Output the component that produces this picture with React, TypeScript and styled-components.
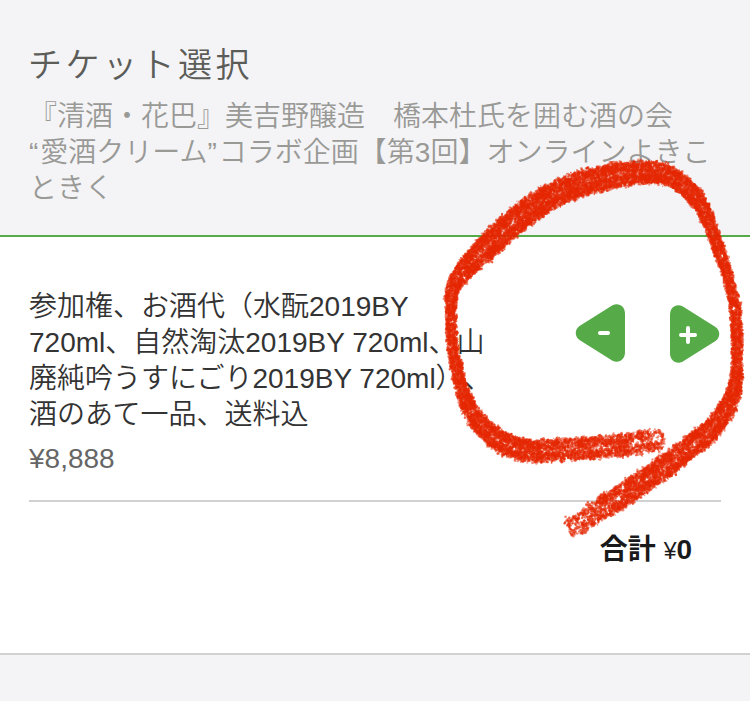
import React from "react";
import styled, { createGlobalStyle } from "styled-components";

const ticketLines = [
  "参加権、お酒代（水酛2019BY",
  "720ml、自然淘汰2019BY 720ml、山",
  "廃純吟うすにごり2019BY 720ml）、",
  "酒のあて一品、送料込",
];

// x, y, half width, density
const strokePoints = [
  [662, 440, 11, 0.28],
  [650, 441, 12, 0.42],
  [630, 444, 12, 0.55],
  [602, 447, 12, 0.62],
  [573, 449, 12, 0.66],
  [545, 451, 12, 0.72],
  [522, 450, 12, 0.85],
  [497, 439, 11, 1],
  [474, 416, 9, 1],
  [463, 392, 7, 1],
  [457, 370, 6, 1],
  [452, 340, 5.5, 1],
  [451, 307, 5.5, 1],
  [453, 287, 7.5, 1],
  [463, 272, 10, 1],
  [482, 252, 12.5, 0.95],
  [513, 223, 13.5, 0.95],
  [547, 199, 13.5, 0.95],
  [580, 184, 13.5, 0.92],
  [613, 176, 13, 0.92],
  [637, 173, 12, 0.95],
  [660, 173, 11, 1],
  [677, 180, 9.5, 1],
  [696, 198, 9, 1],
  [708, 220, 7, 1],
  [718, 247, 6, 1],
  [728, 277, 5.5, 1],
  [735, 307, 5.5, 1],
  [737, 337, 5.5, 1],
  [737, 363, 5.5, 1],
  [735, 387, 7.5, 1],
  [727, 409, 9.5, 0.95],
  [710, 430, 11, 0.9],
  [683, 453, 12, 0.85],
  [653, 475, 12, 0.8],
  [623, 495, 12, 0.72],
  [597, 511, 12, 0.5],
  [569, 530, 11, 0.22],
];

const spline = (a: number, b: number, c: number, d: number, t: number) =>
  0.5 * (2 * b + (c - a) * t + (2 * a - 5 * b + 4 * c - d) * t * t + (3 * b - a - 3 * c + d) * t * t * t);

const circle = (cx: number, cy: number, r: number) =>
  `M${(cx - r).toFixed(1)} ${cy.toFixed(1)}a${r.toFixed(2)} ${r.toFixed(2)} 0 1 0 ${(r * 2).toFixed(2)} 0a${r.toFixed(2)} ${r.toFixed(2)} 0 1 0 ${(-r * 2).toFixed(2)} 0`;

const createCrayon = () => {
  let seed = 4217;
  const random = () => {
    seed = (seed + 0x6d2b79f5) | 0;
    let t = Math.imul(seed ^ (seed >>> 15), 1 | seed);
    t = (t + Math.imul(t ^ (t >>> 7), 61 | t)) ^ t;
    return ((t ^ (t >>> 14)) >>> 0) / 4294967296;
  };
  // several layers, so that overlapping grains get darker
  const layers = Array.from({ length: 10 }, () => "");
  const last = strokePoints.length - 1;

  for (let i = 0; i < last; i++) {
    const p0 = strokePoints[Math.max(0, i - 1)];
    const p1 = strokePoints[i];
    const p2 = strokePoints[i + 1];
    const p3 = strokePoints[Math.min(last, i + 2)];
    const at = (t: number) => p1.map((_, k) => spline(p0[k], p1[k], p2[k], p3[k], t));
    const length = Math.hypot(p2[0] - p1[0], p2[1] - p1[1]);
    const width = (p1[2] + p2[2]) / 2;

    // grains come in small clumps
    const count = Math.round(length * width * 1.5);
    for (let n = 0; n < count; n++) {
      const t = random();
      const [x, y, half, density] = at(t);
      if (random() > density) continue;
      const [nx, ny] = at(t + 0.01);
      const angle = Math.atan2(ny - y, nx - x) + Math.PI / 2;
      const side = random() < 0.5 ? -1 : 1;
      const spread = side * half * (random() * 0.8 + random() * random() * 0.3);
      const along = (random() - 0.5) * 4;
      const cx = x + Math.cos(angle) * spread + Math.sin(angle) * along;
      const cy = y + Math.sin(angle) * spread - Math.cos(angle) * along;
      for (let g = 0; g < 3; g++) {
        layers[Math.floor(random() * layers.length)] += circle(
          cx + (random() - 0.5) * 3,
          cy + (random() - 0.5) * 3,
          0.6 + random() * 0.8
        );
      }
    }
  }
  return layers;
};

const crayonLayers = createCrayon();

const App = () => {
  return (
    <Page>
      <GlobalStyle />
      <Header>
        <Title>チケット選択</Title>
        <Description>
          <Line>『清酒・花巴』美吉野醸造　橋本杜氏を囲む酒の会</Line>
          <Line>
            <Quote>“</Quote>愛酒クリーム<Quote>”</Quote>コラボ企画【第3回】オンラインよきこ
          </Line>
          <Line>ときく</Line>
        </Description>
      </Header>

      <Content>
        <Ticket>
          <TicketInfo>
            <TicketName>
              {ticketLines.map((line) => (
                <Line key={line}>{line}</Line>
              ))}
            </TicketName>
            <Price>¥8,888</Price>
          </TicketInfo>
          <Counter>
            <CountButton aria-label="減らす">
              <svg width="50" height="60" viewBox="0 0 50 60">
                <path
                  d="M37.5 1.2C44 -1.5 50 2.3 50 10V48C50 55.7 44 59.5 37.5 56.8L4.5 36C-0.5 32.5 -0.5 25.5 4.5 22Z"
                  fill="#56ab48"
                />
                <path d="M25 29H33" stroke="#fff" strokeWidth="4" strokeLinecap="round" />
              </svg>
            </CountButton>
            <CountButton aria-label="増やす">
              <svg width="50" height="60" viewBox="0 0 50 60">
                <path
                  d="M12.5 2.2C6 -0.5 0 3.3 0 11V49C0 56.7 6 60.5 12.5 57.8L45.5 37C50.5 33.5 50.5 26.5 45.5 23Z"
                  fill="#56ab48"
                />
                <path d="M11 31H25M18 24V38" stroke="#fff" strokeWidth="4" strokeLinecap="round" />
              </svg>
            </CountButton>
          </Counter>
        </Ticket>
        <Total>
          合計 <Yen>¥</Yen>0
        </Total>
      </Content>
      <Footer />

      <Marker viewBox="0 0 750 701">
        {crayonLayers.map((layer, index) => (
          <path key={index} d={layer} fill="#e62600" fillOpacity="0.5" />
        ))}
      </Marker>
    </Page>
  );
};

const GlobalStyle = createGlobalStyle`
  body {
    margin: 0;
    font-family: "Liberation Sans", "Noto Sans CJK JP", sans-serif;
    text-spacing-trim: space-all;
  }
`;
const Page = styled.div`
  position: relative;
  display: flex;
  flex-direction: column;
  width: 750px;
  height: 701px;
  overflow: hidden;
  background-color: #fff;
`;
const Header = styled.header`
  height: 237px;
  padding: 40px 29px 0;
  box-sizing: border-box;
  border-bottom: 2px solid #56ab48;
  background-color: #f4f4f7;
`;
const Title = styled.h1`
  margin: 0 0 0 -1px;
  font-size: 34px;
  font-weight: 350;
  line-height: 50px;
  letter-spacing: 3.5px;
  color: #5c5c58;
`;
const Description = styled.p`
  margin: 9px 0 0;
  font-size: 28px;
  font-weight: 350;
  line-height: 36px;
  color: #999996;
`;
const Line = styled.span`
  display: block;
  white-space: nowrap;
`;
const Quote = styled.span`
  letter-spacing: 2px;
`;
const Content = styled.main`
  height: 418px;
  padding: 52px 29px 0;
  box-sizing: border-box;
  border-bottom: 2px solid #d1d1d1;
`;
const Ticket = styled.section`
  display: flex;
  justify-content: space-between;
  height: 213px;
  box-sizing: border-box;
  border-bottom: 2px solid #d1d1d1;
`;
const TicketInfo = styled.div`
  width: 470px;
`;
const TicketName = styled.div`
  font-size: 28px;
  font-weight: 350;
  line-height: 36px;
  color: #333;
`;
const Price = styled.div`
  margin-top: 8px;
  font-size: 28px;
  line-height: 36px;
  color: #666;
`;
const Counter = styled.div`
  display: flex;
  gap: 45px;
  padding: 15px 1px 0 0;
`;
const CountButton = styled.button`
  display: block;
  width: 50px;
  height: 60px;
  padding: 0;
  border: 0;
  background: none;

  svg {
    display: block;
  }
`;
const Total = styled.div`
  padding: 30px 29px 0 0;
  font-size: 28px;
  font-weight: 700;
  line-height: 36px;
  text-align: right;
  color: #1a1a1a;
`;
const Yen = styled.span`
  font-size: 23px;
  font-weight: 400;
`;
const Footer = styled.footer`
  flex: 1;
  background-color: #f4f4f6;
`;
const Marker = styled.svg`
  position: absolute;
  top: 0;
  left: 0;
  width: 750px;
  height: 701px;
  pointer-events: none;
`;

export default App;
